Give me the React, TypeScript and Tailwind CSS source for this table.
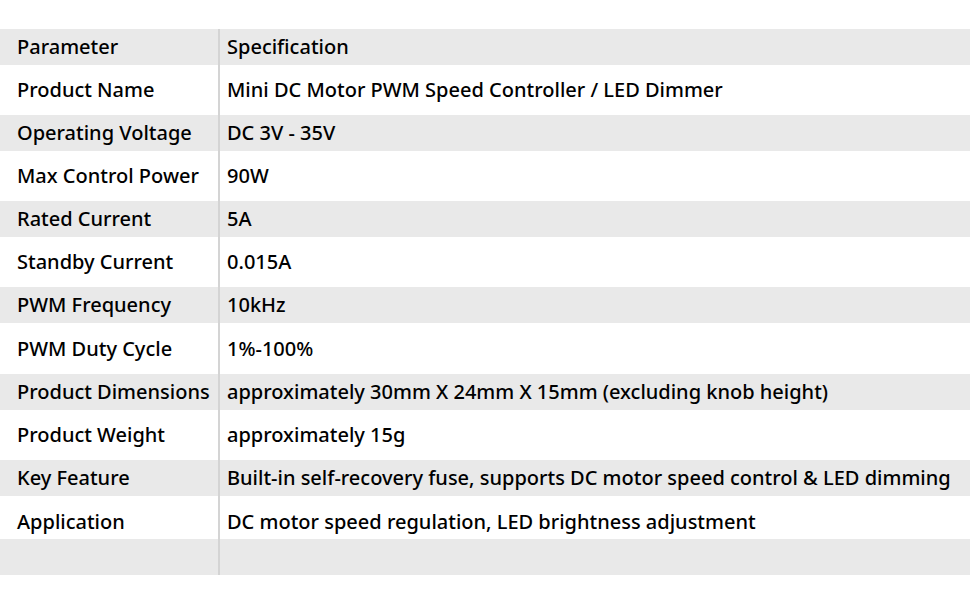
import React from 'react';

const rows: [string, string][] = [
  ['Parameter', 'Specification'],
  ['Product Name', 'Mini DC Motor PWM Speed Controller / LED Dimmer'],
  ['Operating Voltage', 'DC 3V - 35V'],
  ['Max Control Power', '90W'],
  ['Rated Current', '5A'],
  ['Standby Current', '0.015A'],
  ['PWM Frequency', '10kHz'],
  ['PWM Duty Cycle', '1%-100%'],
  ['Product Dimensions', 'approximately 30mm X 24mm X 15mm (excluding knob height)'],
  ['Product Weight', 'approximately 15g'],
  ['Key Feature', 'Built-in self-recovery fuse, supports DC motor speed control & LED dimming'],
  ['Application', 'DC motor speed regulation, LED brightness adjustment'],
  ['', ''],
];

const heights = [
  'h-[36px]', 'h-[50px]', 'h-[36px]', 'h-[50px]', 'h-[36px]', 'h-[50px]', 'h-[36px]',
  'h-[51px]', 'h-[36px]', 'h-[50px]', 'h-[36px]', 'h-[43px]', 'h-[36px]',
];

export default function App() {
  return (
    <div className="w-[970px] h-[600px] bg-white pt-[29px] font-['Noto_Sans',sans-serif] text-[20px] font-medium text-black">
      {rows.map(([k, v], i) => {
        const shift = i === 11 ? 'pt-[9px]' : '';
        return (
          <div key={i} className={`flex ${heights[i]} ${i % 2 === 0 ? 'bg-[#e9e9e9]' : 'bg-white'}`}>
            <div className={`w-[218px] flex items-center pl-[17px] whitespace-nowrap ${shift}`}>{k}</div>
            <div className="w-[2px] bg-[#d4d4d4]" />
            <div className={`flex-1 flex items-center pl-[7px] whitespace-nowrap ${shift}`}>{v}</div>
          </div>
        );
      })}
    </div>
  );
}
